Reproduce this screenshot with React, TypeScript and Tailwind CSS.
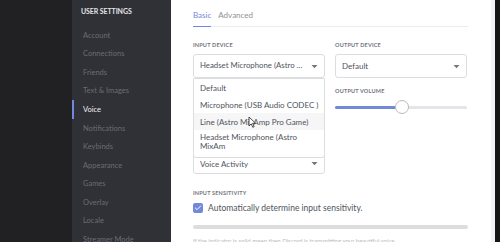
import { Check } from "lucide-react";

const nav = [
  "Account",
  "Connections",
  "Friends",
  "Text & Images",
  "Voice",
  "Notifications",
  "Keybinds",
  "Appearance",
  "Games",
  "Overlay",
  "Locale",
  "Streamer Mode",
];

const options = ["Default", "Microphone (USB Audio CODEC )", "Line (Astro MixAmp Pro Game)"];

function Caret() {
  return (
    <svg width="7" height="5" viewBox="0 0 7 5" className="shrink-0">
      <path d="M0.5 1h6L3.5 4.2z" fill="#72767d" />
    </svg>
  );
}

function Label({ children }: { children: React.ReactNode }) {
  return <div className="text-[5.5px] font-bold uppercase tracking-[0.2px] text-[#72767d] leading-[8px]">{children}</div>;
}

export default function App() {
  return (
    <div className="w-[500px] h-[242px] flex overflow-hidden font-['Lato',sans-serif]">
      <div className="w-[72px] shrink-0 bg-[#212124]" />

      <div className="w-[99px] shrink-0 bg-[#2f3136] pt-[7px]">
        <div className="pl-[9px] text-[7px] font-bold text-[#e3e4e6] leading-[9px] tracking-[-0.1px]">USER SETTINGS</div>
        <div className="mt-[10px] flex flex-col">
          {nav.map((n) => (
            <div key={n} className="relative h-[18.6px] flex items-center pl-[11px]">
              {n === "Voice" && <div className="absolute left-0 top-[-0.5px] w-[2px] h-[19px] bg-[#7289da]" />}
              <span className={`text-[7.5px] leading-none whitespace-nowrap ${n === "Voice" ? "text-[#f0f0f0]" : "text-[#6a6d73]"}`}>{n}</span>
            </div>
          ))}
        </div>
      </div>

      <div className="w-[320px] shrink-0 bg-white pl-[22px] pr-[23px] pt-[10px]">
        <div className="flex gap-[7px] border-b border-[#ececee] text-[8px] leading-[10px]">
          <div className="text-[#7289da] pb-[6px] border-b border-[#7289da] -mb-px">Basic</div>
          <div className="text-[#8e9297] pb-[6px]">Advanced</div>
        </div>

        <div className="mt-[14px] flex gap-[10px]">
          <div className="w-[132px] relative">
            <Label>Input Device</Label>
            <div className="mt-[5px] h-[24px] border border-[#dcdddf] rounded-[3px] flex items-center justify-between px-[6px] text-[7.8px] text-[#4f545c] whitespace-nowrap">
              <span>Headset Microphone (Astro …</span>
              <Caret />
            </div>
            <div className="h-[75px]" />
            <div className="h-[21px] border border-[#dcdddf] rounded-[3px] flex items-center justify-between px-[6px] text-[8px] text-[#4f545c]">
              <span>Voice Activity</span>
              <Caret />
            </div>

            <div className="absolute left-0 top-[37px] w-[132px] bg-white border border-[#dcdddf] rounded-b-[3px] text-[8px] text-[#4f545c]">
              {options.map((o) => (
                <div key={o} className={`h-[17px] flex items-center px-[6px] whitespace-nowrap ${o.startsWith("Line") ? "bg-[#f6f6f7]" : ""}`}>
                  {o}
                </div>
              ))}
              <div className="px-[6px] pt-[3px] pb-[6px] leading-[9px]">
                Headset Microphone (Astro
                <br />
                MixAm
              </div>
              <svg width="9" height="12" viewBox="0 0 9 12" className="absolute left-[54px] top-[37px]">
                <path d="M1 1v9l2.2-2.1 1.6 3.4 1.4-.7-1.6-3.3h3z" fill="#fff" stroke="#222" strokeWidth="0.8" strokeLinejoin="round" />
              </svg>
            </div>
          </div>

          <div className="w-[132px]">
            <Label>Output Device</Label>
            <div className="mt-[5px] h-[24px] border border-[#dcdddf] rounded-[3px] flex items-center justify-between px-[6px] text-[8px] text-[#4f545c]">
              <span>Default</span>
              <Caret />
            </div>
            <div className="mt-[9px]">
              <Label>Output Volume</Label>
            </div>
            <div className="mt-[5px] relative h-[14px] flex items-center">
              <div className="w-full h-[3px] rounded-full bg-[#e3e5e8] flex">
                <div className="w-[61px] h-full rounded-full bg-[#7289da]" />
              </div>
              <div className="absolute left-[60px] top-0 w-[14px] h-[14px] rounded-full bg-white border border-[#b9bbbe]" />
            </div>
          </div>
        </div>

        <div className="mt-[15px]">
          <Label>Input Sensitivity</Label>
        </div>
        <div className="mt-[5px] flex items-center gap-[5px]">
          <div className="w-[10px] h-[10px] rounded-[2px] bg-[#7289da] flex items-center justify-center">
            <Check className="w-[8px] h-[8px] text-white" strokeWidth={3} />
          </div>
          <span className="text-[8.5px] text-[#4f545c]">Automatically determine input sensitivity.</span>
        </div>
        <div className="mt-[10px] h-[4px] rounded-full bg-[#dcdddf]" />
        <div className="mt-[8px] text-[6px] text-[#b9bbbe] leading-[8px] whitespace-nowrap">
          If the indicator is solid green then Discord is transmitting your beautiful voice.
        </div>
      </div>

      <div className="w-[4px] shrink-0 bg-[#f0f1f2]" />
      <div className="flex-1 bg-[#141414]" />
    </div>
  );
}
